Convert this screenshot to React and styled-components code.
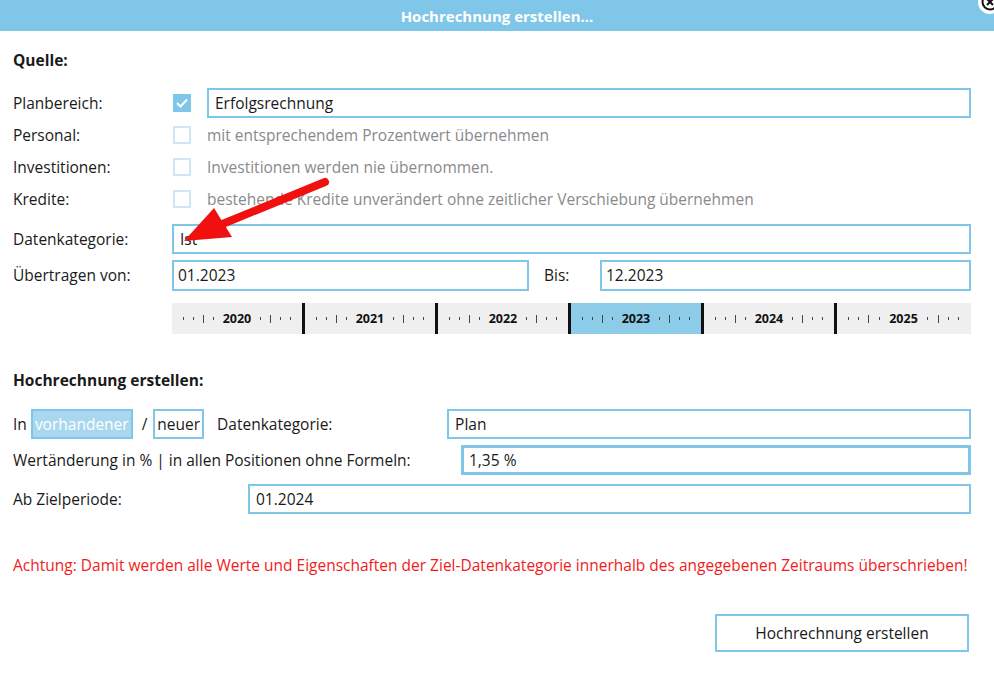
import React from 'react';
import styled, { createGlobalStyle } from 'styled-components';

const Global = createGlobalStyle`
  body { margin: 0; background: #fff; font-family: 'Open Sans', 'Noto Sans', sans-serif; color: #1a1a1a; }
`;

const blue = '#7fc6e8';

const Window = styled.div`
  position: relative;
  width: 994px;
  height: 690px;
  overflow: hidden;
  background: #fff;
`;

const TitleBar = styled.div`
  height: 31px;
  background: ${blue};
  color: #fff;
  font-weight: 700;
  font-size: 15px;
  display: flex;
  align-items: center;
  justify-content: center;
`;

const Close = styled.div`
  position: absolute;
  right: -8px;
  top: -10px;
  width: 24px;
  height: 24px;
  border-radius: 50%;
  background: #fff;
  display: flex;
  align-items: center;
  justify-content: center;
`;

const Body = styled.div`
  padding: 18px 23px 0 13px;
  font-size: 15.5px;
`;

const Heading = styled.div`
  font-weight: 700;
  font-size: 15.5px;
  margin-bottom: 15px;
`;

const Row = styled.div`
  display: flex;
  align-items: center;
  height: ${p => p.h || 32}px;
  margin-top: ${p => p.mt || 0}px;
`;

const Label = styled.div`
  width: ${p => p.w || 159}px;
  flex-shrink: 0;
`;

const Check = styled.div`
  width: 18px;
  height: 18px;
  box-sizing: border-box;
  margin: 0 16px 0 1px;
  border: 2px solid ${p => (p.checked ? blue : '#cfe6f3')};
  background: ${p => (p.checked ? blue : '#fff')};
  display: flex;
  align-items: center;
  justify-content: center;
  flex-shrink: 0;
`;

const Hint = styled.div`
  color: #8a8a8a;
`;

const Input = styled.div`
  flex: ${p => (p.w ? 'none' : 1)};
  width: ${p => (p.w ? p.w + 'px' : 'auto')};
  height: ${p => p.h || 30}px;
  box-sizing: border-box;
  border: ${p => p.b || 2}px solid ${blue};
  padding: 0 ${p => 8 - (p.b || 2)}px;
  display: flex;
  align-items: center;
`;

const Timeline = styled.div`
  margin-left: 159px;
  margin-top: 9px;
  height: 31px;
  background: #efefef;
  display: flex;
`;

const Year = styled.div`
  width: 133px;
  box-sizing: border-box;
  display: flex;
  align-items: center;
  justify-content: space-around;
  padding: 0 6px;
  background: ${p => (p.active ? '#8ccce9' : 'transparent')};
  border-right: ${p => (p.last ? 'none' : '3px solid #111')};
  height: 31px;
  background-clip: padding-box;
  position: relative;
`;

const Dot = styled.span`
  width: 1px;
  height: ${p => (p.big ? 8 : 3)}px;
  background: #444;
`;

const YearText = styled.span`
  font-size: 12.5px;
  font-weight: 700;
  color: #111;
`;

const Toggle = styled.div`
  height: 30px;
  box-sizing: border-box;
  border: 2px solid ${blue};
  padding: 0 2px;
  display: flex;
  align-items: center;
  background: ${p => (p.on ? '#a9d7ef' : '#fff')};
  color: ${p => (p.on ? '#fff' : '#1a1a1a')};
`;

const Warning = styled.div`
  color: #f21b1b;
  margin-top: 35px;
  line-height: 24px;
`;

const Footer = styled.div`
  display: flex;
  justify-content: flex-end;
  margin-top: 37px;
`;

const Button = styled.button`
  width: 254px;
  height: 38px;
  background: #fff;
  border: 2px solid ${blue};
  font: inherit;
  color: #1a1a1a;
  margin-right: 2px;
`;

const Arrow = styled.svg`
  position: absolute;
  left: 180px;
  top: 175px;
`;

const YearSeg = ({ year, active, last }) => (
  <Year active={active} last={last}>
    <Dot /><Dot /><Dot big /><Dot />
    <YearText>{year}</YearText>
    <Dot /><Dot big /><Dot /><Dot />
  </Year>
);

export default function App() {
  return (
    <Window>
      <Global />
      <TitleBar>Hochrechnung erstellen...</TitleBar>
      <Close>
        <svg width="18" height="18" viewBox="0 0 18 18">
          <circle cx="9" cy="9" r="7.5" fill="none" stroke="#111" strokeWidth="2" />
          <path d="M6 6l6 6M12 6l-6 6" stroke="#111" strokeWidth="2" />
        </svg>
      </Close>
      <Body>
        <Heading>Quelle:</Heading>
        <Row h={33}>
          <Label>Planbereich:</Label>
          <Check checked>
            <svg width="12" height="10" viewBox="0 0 12 10"><path d="M1 5l3.5 3.5L11 1.5" fill="none" stroke="#fff" strokeWidth="2" /></svg>
          </Check>
          <Input>Erfolgsrechnung</Input>
        </Row>
        <Row>
          <Label>Personal:</Label>
          <Check />
          <Hint>mit entsprechendem Prozentwert übernehmen</Hint>
        </Row>
        <Row>
          <Label>Investitionen:</Label>
          <Check />
          <Hint>Investitionen werden nie übernommen.</Hint>
        </Row>
        <Row>
          <Label>Kredite:</Label>
          <Check />
          <Hint>bestehende Kredite unverändert ohne zeitlicher Verschiebung übernehmen</Hint>
        </Row>
        <Row h={34} mt={7}>
          <Label>Datenkategorie:</Label>
          <Input>Ist</Input>
        </Row>
        <Row h={38}>
          <Label>Übertragen von:</Label>
          <Input w={357} h={31} style={{ paddingLeft: 4 }}>01.2023</Input>
          <Label w={56} style={{ marginLeft: 15 }}>Bis:</Label>
          <Input h={31} style={{ paddingLeft: 4 }}>12.2023</Input>
        </Row>
        <Timeline>
          {[2020, 2021, 2022, 2023, 2024, 2025].map(y => (
            <YearSeg key={y} year={y} active={y === 2023} last={y === 2025} />
          ))}
        </Timeline>
        <Heading style={{ marginTop: 35, marginBottom: 16 }}>Hochrechnung erstellen:</Heading>
        <Row h={33}>
          <span>In&nbsp;</span>
          <Toggle on>vorhandener</Toggle>
          <span style={{ margin: '0 6px 0 9px' }}>/</span>
          <Toggle>neuer</Toggle>
          <Label w={230} style={{ marginLeft: 13 }}>Datenkategorie:</Label>
          <Input>Plan</Input>
        </Row>
        <Row h={40}>
          <Label w={448}>Wertänderung in % | in allen Positionen ohne Formeln:</Label>
          <Input b={3}>1,35 %</Input>
        </Row>
        <Row h={38}>
          <Label w={235}>Ab Zielperiode:</Label>
          <Input>01.2024</Input>
        </Row>
        <Warning>
          Achtung: Damit werden alle Werte und Eigenschaften der Ziel-Datenkategorie innerhalb des angegebenen Zeitraums überschrieben!
        </Warning>
        <Footer>
          <Button>Hochrechnung erstellen</Button>
        </Footer>
      </Body>
      <Arrow width="150" height="75" viewBox="0 0 150 75">
        <path d="M145 7L40 50" stroke="#f01010" strokeWidth="8" strokeLinecap="round" />
        <path d="M4 66L34 33L52 62Z" fill="#f01010" />
      </Arrow>
    </Window>
  );
}
